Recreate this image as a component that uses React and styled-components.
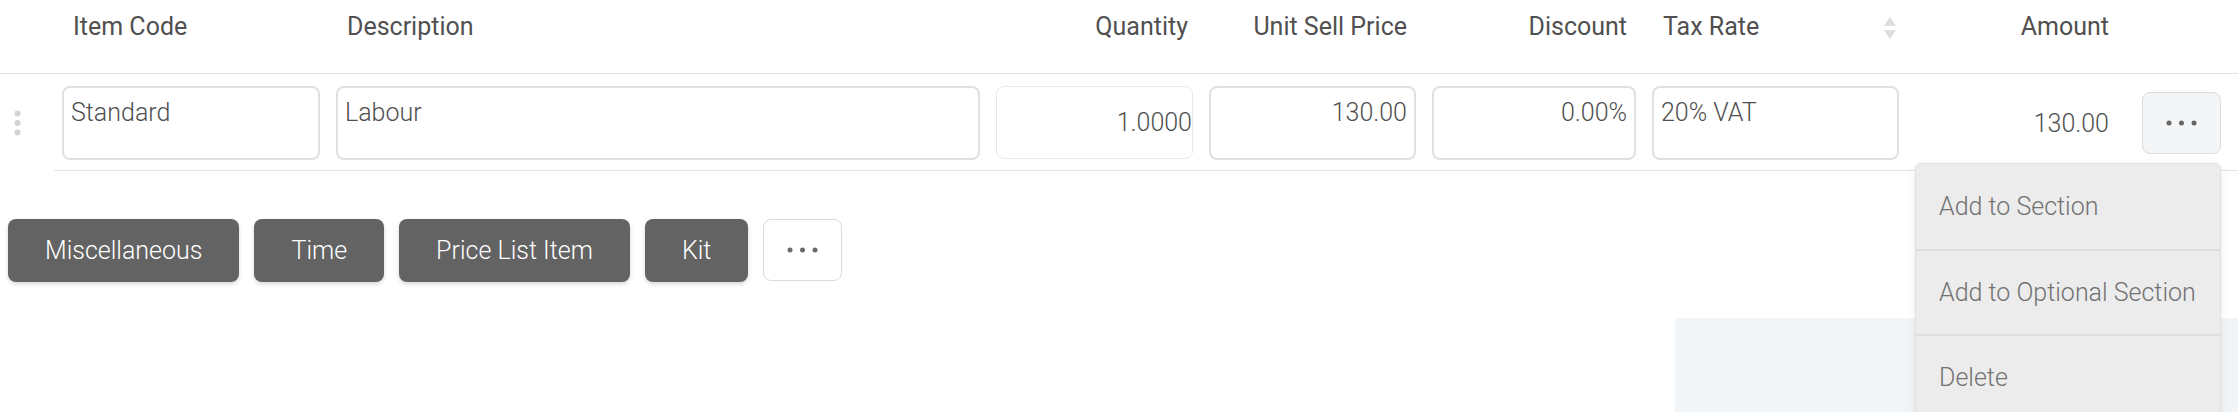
import React from 'react'
import styled, { createGlobalStyle } from 'styled-components'

const GlobalStyle = createGlobalStyle`
  *, *::before, *::after { box-sizing: border-box; }
  body {
    margin: 0;
    background: #fff;
    font-family: Roboto, "Liberation Sans", Arial, sans-serif;
    color: #555;
  }
`

// column widths, 16px gutters between them
const COLUMNS = '46px 258px 644px 197px 207px 204px 247px 194px 96px'

const Page = styled.div`
  position: relative;
  width: 2238px;
  min-height: 412px;
  overflow: hidden;
`

const HeaderRow = styled.div`
  display: grid;
  grid-template-columns: ${COLUMNS};
  column-gap: 16px;
  height: 74px;
  padding-top: 12px;
  padding-right: 17px;
  border-bottom: 1px solid #e4e4e4;
`

const HeadCell = styled.div`
  font-size: 25px;
  line-height: 30px;
  font-weight: 400;
  color: #505050;
  text-align: ${p => (p.$right ? 'right' : 'left')};
  padding-left: ${p => (p.$right ? 0 : 11)}px;
  padding-right: ${p => p.$pr || 0}px;
  white-space: nowrap;
`

const SortCell = styled(HeadCell)`
  display: flex;
  justify-content: space-between;
  padding-right: 3px;
  svg { margin-top: 5px; }
`

const ItemRow = styled.div`
  display: grid;
  grid-template-columns: ${COLUMNS};
  column-gap: 16px;
  align-items: center;
  height: 97px;
  padding-right: 17px;
  background: linear-gradient(#e4e4e4, #e4e4e4) no-repeat 54px 100% / calc(100% - 54px) 1px;
`

const Handle = styled.div`
  padding-left: 14px;
  display: flex;
  align-items: center;
`

const Field = styled.div`
  height: 74px;
  border: 2px solid #e0e0e0;
  border-radius: 8px;
  padding: 10px 7px 0;
  font-size: 25px;
  line-height: 30px;
  font-weight: 300;
  color: #4f4f4f;
  text-align: ${p => (p.$right ? 'right' : 'left')};
  background: #fff;
  white-space: nowrap;
`

const NumberField = styled.div`
  height: 73px;
  border: 1px solid #e9e9e9;
  border-radius: 8px;
  display: flex;
  align-items: center;
  justify-content: flex-end;
  padding-right: 0;
  font-size: 25px;
  font-weight: 300;
  color: #4f4f4f;
`

const AmountCell = styled.div`
  text-align: right;
  font-size: 25px;
  font-weight: 300;
  color: #4f4f4f;
  padding-top: 1px;
`

const ActionCell = styled.div`
  display: flex;
  justify-content: flex-end;
`

const MoreButton = styled.button`
  width: 79px;
  height: 62px;
  border-radius: 8px;
  border: 1px solid #dcdcdc;
  background: ${p => (p.$light ? '#fff' : '#f4f5f7')};
  display: flex;
  align-items: center;
  justify-content: center;
  padding: 0;
  cursor: pointer;
`

const Toolbar = styled.div`
  display: flex;
  gap: 15px;
  padding: 0 8px;
  margin-top: 48px;
`

const AddButton = styled.button`
  height: 63px;
  padding: 0 37px;
  border: none;
  border-radius: 8px;
  background: #636363;
  color: #fff;
  font-family: Roboto, "Liberation Sans", Arial, sans-serif;
  font-size: 25px;
  font-weight: 300;
  box-shadow: 0 2px 4px rgba(0, 0, 0, 0.16);
  cursor: pointer;
`

const TotalsPanel = styled.div`
  margin: 36px 0 0 auto;
  width: 563px;
  height: 120px;
  background: #f2f5f8;
`

const Menu = styled.div`
  position: absolute;
  top: 163px;
  right: 17px;
  width: 306px;
  background: #ececec;
  border: 1px solid #e0e0e0;
  border-radius: 6px 6px 0 0;
  box-shadow: 0 2px 8px rgba(0, 0, 0, 0.08);
`

const MenuItem = styled.div`
  height: 85px;
  display: flex;
  align-items: center;
  padding-left: 23px;
  font-size: 25px;
  font-weight: 300;
  color: #727272;
  border-top: ${p => (p.$first ? 'none' : '2px solid #dedede')};
  white-space: nowrap;
`

const Dots = ({ color = '#666' }) => (
  <svg width="31" height="6" viewBox="0 0 31 6">
    <circle cx="3" cy="3" r="2.5" fill={color} />
    <circle cx="15.5" cy="3" r="2.5" fill={color} />
    <circle cx="28" cy="3" r="2.5" fill={color} />
  </svg>
)

const DragDots = () => (
  <svg width="7" height="26" viewBox="0 0 7 26">
    <circle cx="3.5" cy="3.5" r="3" fill="#d4d4d4" />
    <circle cx="3.5" cy="13" r="3" fill="#d4d4d4" />
    <circle cx="3.5" cy="22.5" r="3" fill="#d4d4d4" />
  </svg>
)

const SortIcon = () => (
  <svg width="12" height="22" viewBox="0 0 12 22">
    <polygon points="6,0 12,9 0,9" fill="#dedede" />
    <polygon points="0,13 12,13 6,22" fill="#dedede" />
  </svg>
)

const addButtons = ['Miscellaneous', 'Time', 'Price List Item', 'Kit']

const App = () => (
  <>
    <GlobalStyle />
    <Page>
      <HeaderRow>
        <div />
        <HeadCell>Item Code</HeadCell>
        <HeadCell>Description</HeadCell>
        <HeadCell $right $pr={5}>Quantity</HeadCell>
        <HeadCell $right $pr={9}>Unit Sell Price</HeadCell>
        <HeadCell $right $pr={9}>Discount</HeadCell>
        <SortCell>
          Tax Rate
          <SortIcon />
        </SortCell>
        <HeadCell $right>Amount</HeadCell>
        <div />
      </HeaderRow>

      <ItemRow>
        <Handle>
          <DragDots />
        </Handle>
        <Field>Standard</Field>
        <Field>Labour</Field>
        <NumberField>1.0000</NumberField>
        <Field $right>130.00</Field>
        <Field $right>0.00%</Field>
        <Field>20% VAT</Field>
        <AmountCell>130.00</AmountCell>
        <ActionCell>
          <MoreButton aria-label="Line options">
            <Dots />
          </MoreButton>
        </ActionCell>
      </ItemRow>

      <Toolbar>
        {addButtons.map(label => (
          <AddButton key={label}>{label}</AddButton>
        ))}
        <MoreButton $light aria-label="More item types">
          <Dots color="#6a6a6a" />
        </MoreButton>
      </Toolbar>

      <TotalsPanel />

      <Menu>
        <MenuItem $first>Add to Section</MenuItem>
        <MenuItem>Add to Optional Section</MenuItem>
        <MenuItem>Delete</MenuItem>
      </Menu>
    </Page>
  </>
)

export default App
